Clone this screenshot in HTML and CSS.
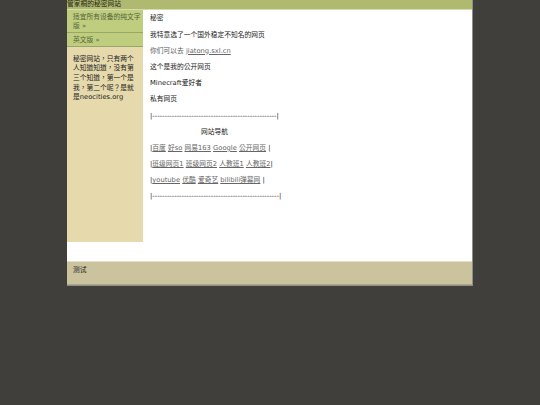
FILE: index.html
```html
<!DOCTYPE html>
<html lang="zh-TW">
<head>
<meta charset="utf-8">
<title>管家桐的秘密网站</title>
<link rel="stylesheet" href="styles.css">
</head>
<body>
<div class="container">
  <header class="header">管家桐的秘密网站</header>
  <div class="columns">
    <aside class="sidebar">
      <ul class="nav">
        <li><a href="#">适宜所有设备的纯文字版 »</a></li>
        <li><a href="#">英文版 »</a></li>
      </ul>
      <p class="note">秘密网站，只有两个人知道知道，没有第三个知道，第一个是我，第二个呢？是就是neocities.org</p>
    </aside>
    <main class="content">
      <p>秘密</p>
      <p>我特意选了一个国外稳定不知名的网页</p>
      <p class="muted">你们可以去 <a href="#">jiatong.sxl.cn</a></p>
      <p>这个是我的公开网页</p>
      <p>Minecraft爱好者</p>
      <p>私有网页</p>
      <p>|---------------------------------------------------|</p>
      <p class="center">网站导航</p>
      <p>|<a href="#">百度</a> <a href="#">好so</a> <a href="#">网易163</a> <a href="#">Google</a> <a href="#">公开网页</a> |</p>
      <p>|<a href="#">班级网页1</a> <a href="#">班级网页2</a> <a href="#">人教班1</a> <a href="#">人教班2</a>|</p>
      <p>|<a href="#">youtube</a> <a href="#">优酷</a> <a href="#">爱奇艺</a> <a href="#">bilibili弹幕网</a> |</p>
      <p>|----------------------------------------------------|</p>
    </main>
  </div>
  <footer class="footer">测试</footer>
</div>
</body>
</html>
```
FILE: styles.css
```css
html, body {
  margin: 0;
  padding: 0;
  min-height: 405px;
  background: #403f3b;
  overflow: hidden;
}
body {
  font-family: "DejaVu Sans", "Noto Sans CJK TC", sans-serif;
  font-size: 6.75px;
  line-height: 8.1px;
  color: #222;
}
.container {
  width: 405px;
  margin: 0 auto;
  background: #fff;
  border-right: 1px solid #8f8f8a;
  box-sizing: content-box;
  box-shadow: 0 1px 0 #8f8f82;
}
.header {
  height: 9px;
  line-height: 9px;
  background: #afb96f;
  border-bottom: 1px solid #d5dbad;
  color: #1e1e10;
}
.columns {
  display: flex;
  height: 251px;
}
.sidebar {
  width: 76px;
  height: 232px;
  flex: none;
  background: #e6d9ac;
}
.nav {
  list-style: none;
  margin: 0;
  padding: 0;
}
.nav li {
  background: #bfcd7f;
  border-bottom: 1px solid #9aa568;
  padding: 3px 0 1px 6px;
  line-height: 9px;
}
.nav a {
  color: #56663a;
  text-decoration: none;
}
.note {
  margin: 0;
  padding: 7.5px 4px 0 6px;
  line-height: 9.7px;
  color: #222;
}
.content {
  flex: 1;
  padding: 4.4px 7px;
}
.content p {
  margin: 0 0 8.1px;
}
.content a {
  color: #666;
}
.muted {
  color: #555;
}
.center {
  padding-left: 51px;
}
.footer {
  height: 24px;
  padding-left: 6px;
  line-height: 17px;
  background: #cbc39d;
  border-top: 1px solid #e6dfc2;
  border-bottom: 1px solid #a9a68c;
  box-sizing: border-box;
  color: #222;
}
```
